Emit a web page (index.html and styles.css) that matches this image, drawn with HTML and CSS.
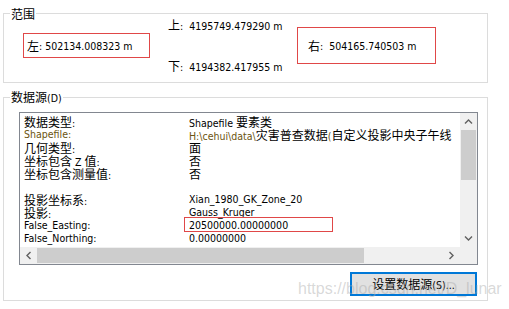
FILE: index.html
```html
<!DOCTYPE html>
<html lang="zh-CN">
<head>
<meta charset="utf-8">
<title>图层属性 - 源</title>
<link rel="stylesheet" href="styles.css">
</head>
<body>
<div class="page">
  <section class="group g1">
    <span class="legend c">范围</span>
    <div class="box box-left"><span class="c">左</span>: 502134.008323 m</div>
    <div class="mid">
      <div class="line"><span class="c">上</span>: &nbsp;4195749.479290 m</div>
      <div class="line"><span class="c">下</span>: &nbsp;4194382.417955 m</div>
    </div>
    <div class="box box-right"><span class="c">右</span>: &nbsp;504165.740503 m</div>
  </section>

  <section class="group g2">
    <span class="legend"><span class="c">数据源</span>(D)</span>
    <div class="list">
      <div class="content">
        <div class="row"><span class="k"><span class="c">数据类型</span>:</span><span class="v">Shapefile <span class="c">要素类</span></span></div>
        <div class="row gold"><span class="k">Shapefile:</span><span class="v">H:\cehui\data\<span class="c blk">灾害普查数据</span>(<span class="c blk">自定义投影中央子午线</span></span></div>
        <div class="row"><span class="k"><span class="c">几何类型</span>:</span><span class="v"><span class="c">面</span></span></div>
        <div class="row"><span class="k"><span class="c">坐标包含</span> Z <span class="c">值</span>:</span><span class="v"><span class="c">否</span></span></div>
        <div class="row"><span class="k"><span class="c">坐标包含测量值</span>:</span><span class="v"><span class="c">否</span></span></div>
        <div class="row"></div>
        <div class="row"><span class="k"><span class="c">投影坐标系</span>:</span><span class="v">Xian_1980_GK_Zone_20</span></div>
        <div class="row"><span class="k"><span class="c">投影</span>:</span><span class="v">Gauss_Kruger</span></div>
        <div class="row"><span class="k">False_Easting:</span><span class="v">20500000.00000000</span><span class="mark"></span></div>
        <div class="row"><span class="k">False_Northing:</span><span class="v">0.00000000</span></div>
      </div>
      <div class="vscroll">
        <div class="sbtn"><svg width="17" height="17" viewBox="0 0 17 17"><polyline points="5,10.5 8.5,7 12,10.5" fill="none" stroke="#606060" stroke-width="1.4"/></svg></div>
        <div class="vtrack"><div class="vthumb"></div></div>
        <div class="sbtn"><svg width="17" height="17" viewBox="0 0 17 17"><polyline points="5,6.5 8.5,10 12,6.5" fill="none" stroke="#606060" stroke-width="1.4"/></svg></div>
      </div>
      <div class="hscroll">
        <div class="sbtn"><svg width="17" height="17" viewBox="0 0 17 17"><polyline points="10.5,5 7,8.5 10.5,12" fill="none" stroke="#606060" stroke-width="1.4"/></svg></div>
        <div class="htrack"><div class="hthumb"></div></div>
        <div class="sbtn"><svg width="17" height="17" viewBox="0 0 17 17"><polyline points="6.5,5 10,8.5 6.5,12" fill="none" stroke="#606060" stroke-width="1.4"/></svg></div>
      </div>
      <div class="corner"></div>
    </div>
    <button class="btn" type="button"><span class="c">设置数据源</span>(S)...</button>
  </section>
</div>
<div class="watermark">https://blog.csdn.net/D_lunar</div>
</body>
</html>
```

FILE: styles.css
```css
html, body {
  margin: 0;
  padding: 0;
  background: #ffffff;
}
body {
  width: 509px;
  height: 309px;
  position: relative;
  overflow: hidden;
  font-family: "DejaVu Sans Condensed", "Noto Sans CJK SC", sans-serif;
  font-size: 10.5px;
  color: #000;
}
.c {
  font-family: "Noto Sans CJK SC", sans-serif;
  font-size: 12px;
}
.page {
  padding: 13px 21px 0 3px;
}
.group {
  position: relative;
  border: 1px solid #dcdcdc;
  box-sizing: border-box;
}
.legend {
  position: absolute;
  left: 6px;
  top: -7px;
  padding: 0 1px;
  background: #fff;
  line-height: 14px;
  height: 14px;
  white-space: nowrap;
}
.g2 .legend {
  top: -8px;
}
.g1 {
  height: 70px;
  display: flex;
  align-items: flex-start;
}
.box {
  box-sizing: border-box;
  border: 1px solid #e04848;
  display: flex;
  align-items: center;
  white-space: nowrap;
}
.box-left {
  margin-left: 19px;
  margin-top: 19px;
  width: 127px;
  height: 25px;
  padding-left: 3px;
}
.mid {
  margin-left: 18px;
  margin-top: 4px;
  width: 129px;
  display: flex;
  flex-direction: column;
  gap: 28px;
}
.line {
  height: 13px;
  line-height: 13px;
  white-space: nowrap;
}
.box-right {
  margin-top: 13px;
  width: 139px;
  height: 37px;
  padding-left: 10px;
}
.g2 {
  margin-top: 14px;
  height: 204px;
  padding: 14px 9px 0 15px;
  display: flex;
  flex-direction: column;
}
.list {
  box-sizing: border-box;
  height: 153px;
  border: 1px solid #828790;
  display: grid;
  grid-template-columns: 1fr 17px;
  grid-template-rows: 1fr 17px;
  background: #fff;
}
.content {
  overflow: hidden;
  padding: 2px 0 0 4px;
}
.row {
  position: relative;
  display: grid;
  grid-template-columns: 165px auto;
  height: 13px;
  line-height: 13px;
  white-space: nowrap;
}
.mark {
  position: absolute;
  left: 160px;
  top: -2px;
  width: 149px;
  height: 15px;
  box-sizing: border-box;
  border: 1px solid #e04848;
}
.gold {
  color: #6b5410;
}
.blk {
  color: #000;
}
.vscroll {
  background: #f0f0f0;
  display: flex;
  flex-direction: column;
}
.sbtn {
  width: 17px;
  height: 17px;
  flex: none;
}
.sbtn svg {
  display: block;
}
.vtrack {
  flex: 1;
}
.vthumb {
  margin: 0 1px;
  height: 50px;
  background: #cdcdcd;
}
.hscroll {
  background: #f0f0f0;
  display: flex;
}
.htrack {
  flex: 1;
  padding: 1px 0;
  box-sizing: border-box;
}
.hthumb {
  width: 327px;
  height: 15px;
  background: #cdcdcd;
}
.corner {
  background: #f0f0f0;
}
.btn {
  margin-top: 7px;
  margin-left: auto;
  margin-right: 1px;
  width: 127px;
  height: 24px;
  box-sizing: border-box;
  border: 2px solid #0078d7;
  background: #e1e1e1;
  padding: 0;
  font-family: "DejaVu Sans Condensed", "Noto Sans CJK SC", sans-serif;
  font-size: 10.5px;
  color: #000;
  line-height: 18px;
}
.watermark {
  position: absolute;
  left: 298px;
  top: 281px;
  font-family: "Liberation Sans", Arial, sans-serif;
  font-size: 16px;
  line-height: 16px;
  color: rgba(170, 170, 170, 0.45);
  white-space: nowrap;
  pointer-events: none;
}
```
